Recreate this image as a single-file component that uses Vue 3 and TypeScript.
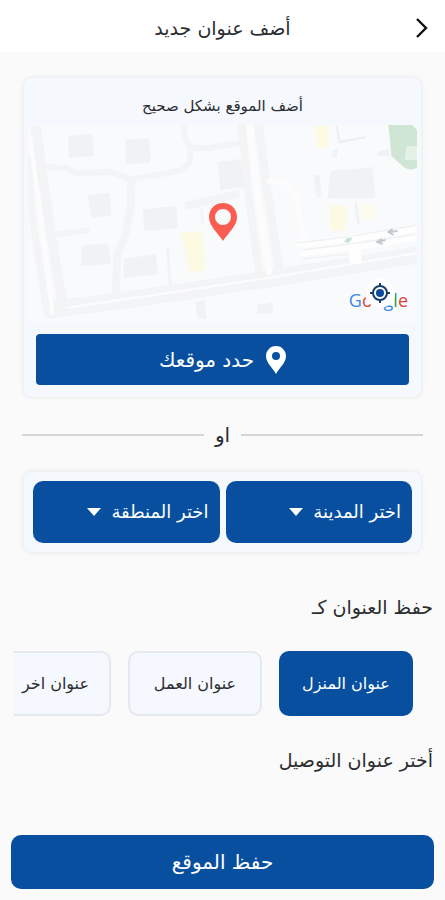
<script setup lang="ts">
import { ref } from 'vue'

interface Option {
  id: string
  label: string
}

const selectors: Option[] = [
  { id: 'city', label: 'اختر المدينة' },
  { id: 'area', label: 'اختر المنطقة' },
]

const addressTypes: Option[] = [
  { id: 'home', label: 'عنوان المنزل' },
  { id: 'work', label: 'عنوان العمل' },
  { id: 'other', label: 'عنوان اخر' },
]

const activeType = ref('home')
</script>

<template>
  <div class="page" dir="rtl">
    <header class="topbar">
      <button class="back" type="button" aria-label="رجوع">
        <svg viewBox="0 0 16 24" width="16" height="24" aria-hidden="true">
          <path d="M3 3 L12 12 L3 21" fill="none" stroke="#111" stroke-width="2.4" />
        </svg>
      </button>
      <h1>أضف عنوان جديد</h1>
    </header>

    <main class="content">
      <section class="card map-card">
        <h2>أضف الموقع بشكل صحيح</h2>
        <div class="map">
          <svg class="map-art" viewBox="0 0 390 197" preserveAspectRatio="xMidYMid slice" aria-hidden="true">
            <rect width="390" height="197" fill="#f9fafc" />
            <g fill="none" stroke="#f3f4f6">
              <path d="M8 0 L22 100 L36 185" stroke-width="10" />
              <path d="M0 30 L6 100 L20 192" stroke-width="7" />
              <path d="M16 42 L38 43 L48 48 L82 47 L104 54 L152 46 L162 38 L164 23 L158 15 L156 0 M164 23 L182 23 L214 18" stroke-width="6" />
              <path d="M104 54 L103 82 L98 110 L90 130 L88 170" stroke-width="8" />
              <path d="M26 110 L62 105" stroke-width="6" />
              <path d="M158 81 L212 69" stroke-width="8" />
              <path d="M20 185 L120 172 L240 154 L390 130" stroke-width="17" />
              <path d="M214 0 L221 70 L232 150" stroke-width="8" />
              <path d="M231 0 L239 62 L252 148" stroke-width="9" />
            </g>
            <g fill="none" stroke="#fcfcfd">
              <path d="M2 12 L16 110 L25 190" stroke-width="4" />
              <path d="M38 183 L140 168 L240 153 L390 128" stroke-width="2" />
              <path d="M222 0 L230 70 L242 150" stroke-width="6" />
              <path d="M240 56 L255 56 Q270 66 272 90 L278 130" stroke-width="6" />
            </g>
            <g fill="none" stroke="#fefefe">
              <path d="M270 120 L320 115 L390 104 M272 129 L330 122 L390 113" stroke-width="5" />
              <path d="M328 110 L328 138" stroke-width="12" />
            </g>
            <g fill="none" stroke="#eceef0">
              <path d="M270 118 L320 112 L390 100 M274 125 L330 118 L390 109 M274 134 L320 129" />
              <path d="M309 1 L312 17 L339 12 M328 78 L331 99" stroke-width="2" />
            </g>
            <path d="M140 122 L143 165 M174 84 L175 98" fill="none" stroke="#f2f3f5" stroke-width="3" />
            <g fill="#f1f2f4">
              <path d="M41 11 L65 9 L66 31 L41 33Z" />
              <path d="M98 15 L122 13 L123 38 L98 39Z" />
              <path d="M60 70 L82 68 L84 90 L64 93Z" />
              <path d="M115 84 L149 81 L150 103 L117 106Z" />
              <path d="M54 121 L80 118 L84 139 L54 141Z" />
              <path d="M96 134 L128 129 L131 149 L96 153Z" />
              <path d="M190 37 L213 34 L217 62 L193 65Z" />
              <path d="M303 46 L345 42 L348 73 L300 73Z" />
              <path d="M286 50 L292 50 L294 72 L289 72Z" />
              <path d="M306 25 L310 24 L310 33 L304 32Z M350 27 L362 24 L363 32 L350 30Z" />
              <path d="M168 177 L177 175 L179 194 L170 194Z M230 180 L245 177 L246 188 L230 189Z" />
            </g>
            <g fill="#fdfae4">
              <path d="M153 108 L175 106 L178 144 L163 149Z" />
              <path d="M288 1 L300 1 L301 23 L289 22Z" />
              <path d="M302 80 L318 80 L318 105 L303 106Z" />
            </g>
            <path d="M331 79 L345 78 L351 92 L332 95Z" fill="#fafaef" />
            <path d="M361 0 L384 0 Q390 3 390 10 L390 42 Q384 47 376 42 L364 31Z" fill="#cfe6d5" />
            <path d="M379 21 L390 21 L390 35 L377 35Z" fill="#e3f1e7" />
            <g fill="none" stroke="#c3c8cb" stroke-width="2">
              <path d="M362 107 L370 106 M365 104 L361 107 L366 110 M349 117 L358 115 M354 114 L350 117 L355 119" />
            </g>
            <path d="M317 117 Q318 112 325 113 L321 118Z" fill="#c4e2d2" />
          </svg>
          <svg class="marker" viewBox="0 0 28 38" width="28" height="38" aria-hidden="true">
            <path fill="#fb5d50" fill-rule="evenodd" d="M14 0 C6 0 0 6 0 14 C0 23 9 30 14 38 C19 30 28 23 28 14 C28 6 22 0 14 0Z M14 6 A8 8 0 1 1 14 22 A8 8 0 1 1 14 6Z" />
          </svg>
          <div class="attribution" dir="ltr">
            <span class="g-blue">G</span><span class="g-red">o</span><span class="g-yellow">o</span><span class="g-blue">g</span><span class="g-green">l</span><span class="g-red">e</span>
            <button class="locate" type="button" aria-label="موقعي الحالي">
              <svg viewBox="0 0 20 20" width="20" height="20" aria-hidden="true">
                <circle cx="10" cy="10" r="7" fill="none" stroke="#163f70" stroke-width="2" />
                <circle cx="10" cy="10" r="4" fill="#0b499b" />
                <path d="M10 0V3 M10 17V20 M0 10H3 M17 10H20" stroke="#163f70" stroke-width="2" />
              </svg>
            </button>
          </div>
        </div>
        <button class="primary pick" type="button">
          <svg viewBox="0 0 20 28" width="20" height="28" aria-hidden="true">
            <path fill="#fff" fill-rule="evenodd" d="M10 0 C4 0 0 5 0 10 C0 17 7 22 10 28 C13 22 20 17 20 10 C20 5 16 0 10 0Z M10 6 A4 4 0 1 1 10 14 A4 4 0 1 1 10 6Z" />
          </svg>
          <span>حدد موقعك</span>
        </button>
      </section>

      <div class="divider"><span>او</span></div>

      <section class="card selects">
        <label v-for="item in selectors" :key="item.id" class="select-box">
          <select :name="item.id" :aria-label="item.label">
            <option value="">{{ item.label }}</option>
          </select>
          <svg viewBox="0 0 14 8" width="14" height="8" aria-hidden="true">
            <path d="M0 0H14L7 8Z" fill="#fff" />
          </svg>
        </label>
      </section>
    </main>

    <h2 class="heading">حفظ العنوان كـ</h2>
    <div class="chips">
      <button
        v-for="type in addressTypes"
        :key="type.id"
        type="button"
        class="chip"
        :class="{ active: type.id === activeType }"
        :aria-pressed="type.id === activeType"
        @click="activeType = type.id"
      >
        {{ type.label }}
      </button>
    </div>
    <h2 class="heading">أختر عنوان التوصيل</h2>

    <footer class="footer">
      <button class="primary save" type="button">حفظ الموقع</button>
    </footer>
  </div>
</template>

<style>
body {
  background: #fafafa;
}
</style>

<style scoped>
.page {
  box-sizing: border-box;
  display: flex;
  flex-direction: column;
  min-height: 100vh;
  background: #fafafa;
  color: #2b2d31;
  font-family: "DejaVu Sans", sans-serif;
}

.page *,
.page *::before,
.page *::after {
  box-sizing: border-box;
}

button,
select {
  font: inherit;
  border: 0;
  cursor: pointer;
}

h1,
h2 {
  margin: 0;
  font-weight: 400;
}

.topbar {
  display: grid;
  grid-template-columns: 46px 1fr 46px;
  align-items: center;
  height: 52px;
  padding-top: 4px;
  background: #fff;
}

.topbar h1 {
  font-size: 19px;
  line-height: 24px;
  text-align: center;
}

.back {
  display: flex;
  justify-content: center;
  padding: 0;
  background: none;
}

.content {
  display: flex;
  flex-direction: column;
  padding: 24px 22px 0;
}

.card {
  border: 2px solid #f1f2f4;
  border-radius: 10px;
  background: #f5f8fd;
  box-shadow: 0 0 4px rgba(0, 0, 0, 0.03);
}

.map-card {
  padding: 16px 4px 12px;
}

.map-card h2 {
  font-size: 15px;
  line-height: 24px;
  text-align: center;
}

.map {
  position: relative;
  margin-top: 7px;
}

.map-art {
  display: block;
  width: 100%;
  height: 197px;
}

.marker {
  position: absolute;
  top: 78px;
  left: calc(50% - 14px);
}

.attribution {
  position: absolute;
  right: 9px;
  bottom: 10px;
  font-family: "Open Sans", sans-serif;
  font-size: 18px;
  line-height: 24px;
}

.g-blue {
  color: #4285e8;
}

.g-red {
  color: #df4438;
}

.g-yellow {
  color: #f4b400;
}

.g-green {
  color: #2ba14b;
}

.locate {
  position: absolute;
  left: 16px;
  bottom: 4px;
  display: flex;
  align-items: center;
  justify-content: center;
  width: 30px;
  height: 30px;
  padding: 0;
  border-radius: 50%;
  background: #fdfdfe;
}

.primary {
  display: flex;
  align-items: center;
  justify-content: center;
  background: #08509f;
  color: #fff;
  font-size: 20px;
}

.pick {
  gap: 12px;
  width: calc(100% - 16px);
  height: 51px;
  margin: 12px 8px 0;
  border-radius: 4px;
}

.divider {
  display: flex;
  align-items: center;
  gap: 11px;
  height: 24px;
  margin: 24px 0 23px;
  font-size: 20px;
  line-height: 24px;
}

.divider::before,
.divider::after {
  content: "";
  flex: 1;
  height: 2px;
  background: #d5d5d5;
}

.selects {
  display: grid;
  grid-template-columns: 1fr 1fr;
  gap: 6px;
  padding: 9px;
}

.select-box {
  display: flex;
  align-items: center;
  gap: 10px;
  height: 62px;
  padding-right: 11px;
  border-radius: 10px;
  background: #08509f;
}

.select-box select {
  appearance: none;
  padding: 0;
  background: none;
  color: #fff;
  font-size: 18px;
  line-height: 32px;
}

.heading {
  padding: 0 12px;
  font-size: 19px;
  line-height: 24px;
}

.content + .heading {
  margin-top: 41px;
}

.chips {
  display: grid;
  grid-template-columns: 134px 134px max-content;
  gap: 17px;
  margin: 32px 14px;
  padding-right: 18px;
  overflow: hidden;
}

.chip {
  height: 65px;
  padding: 0 20px;
  border: 2px solid #e5e8ed;
  border-radius: 10px;
  background: #f5f8fe;
  color: #2b2d31;
  font-size: 16px;
  white-space: nowrap;
}

.chip.active {
  border-color: #08509f;
  background: #08509f;
  color: #fff;
}

.footer {
  margin-top: auto;
  padding: 24px 11px 11px;
}

.save {
  width: 100%;
  height: 54px;
  border-radius: 10px;
}
</style>
